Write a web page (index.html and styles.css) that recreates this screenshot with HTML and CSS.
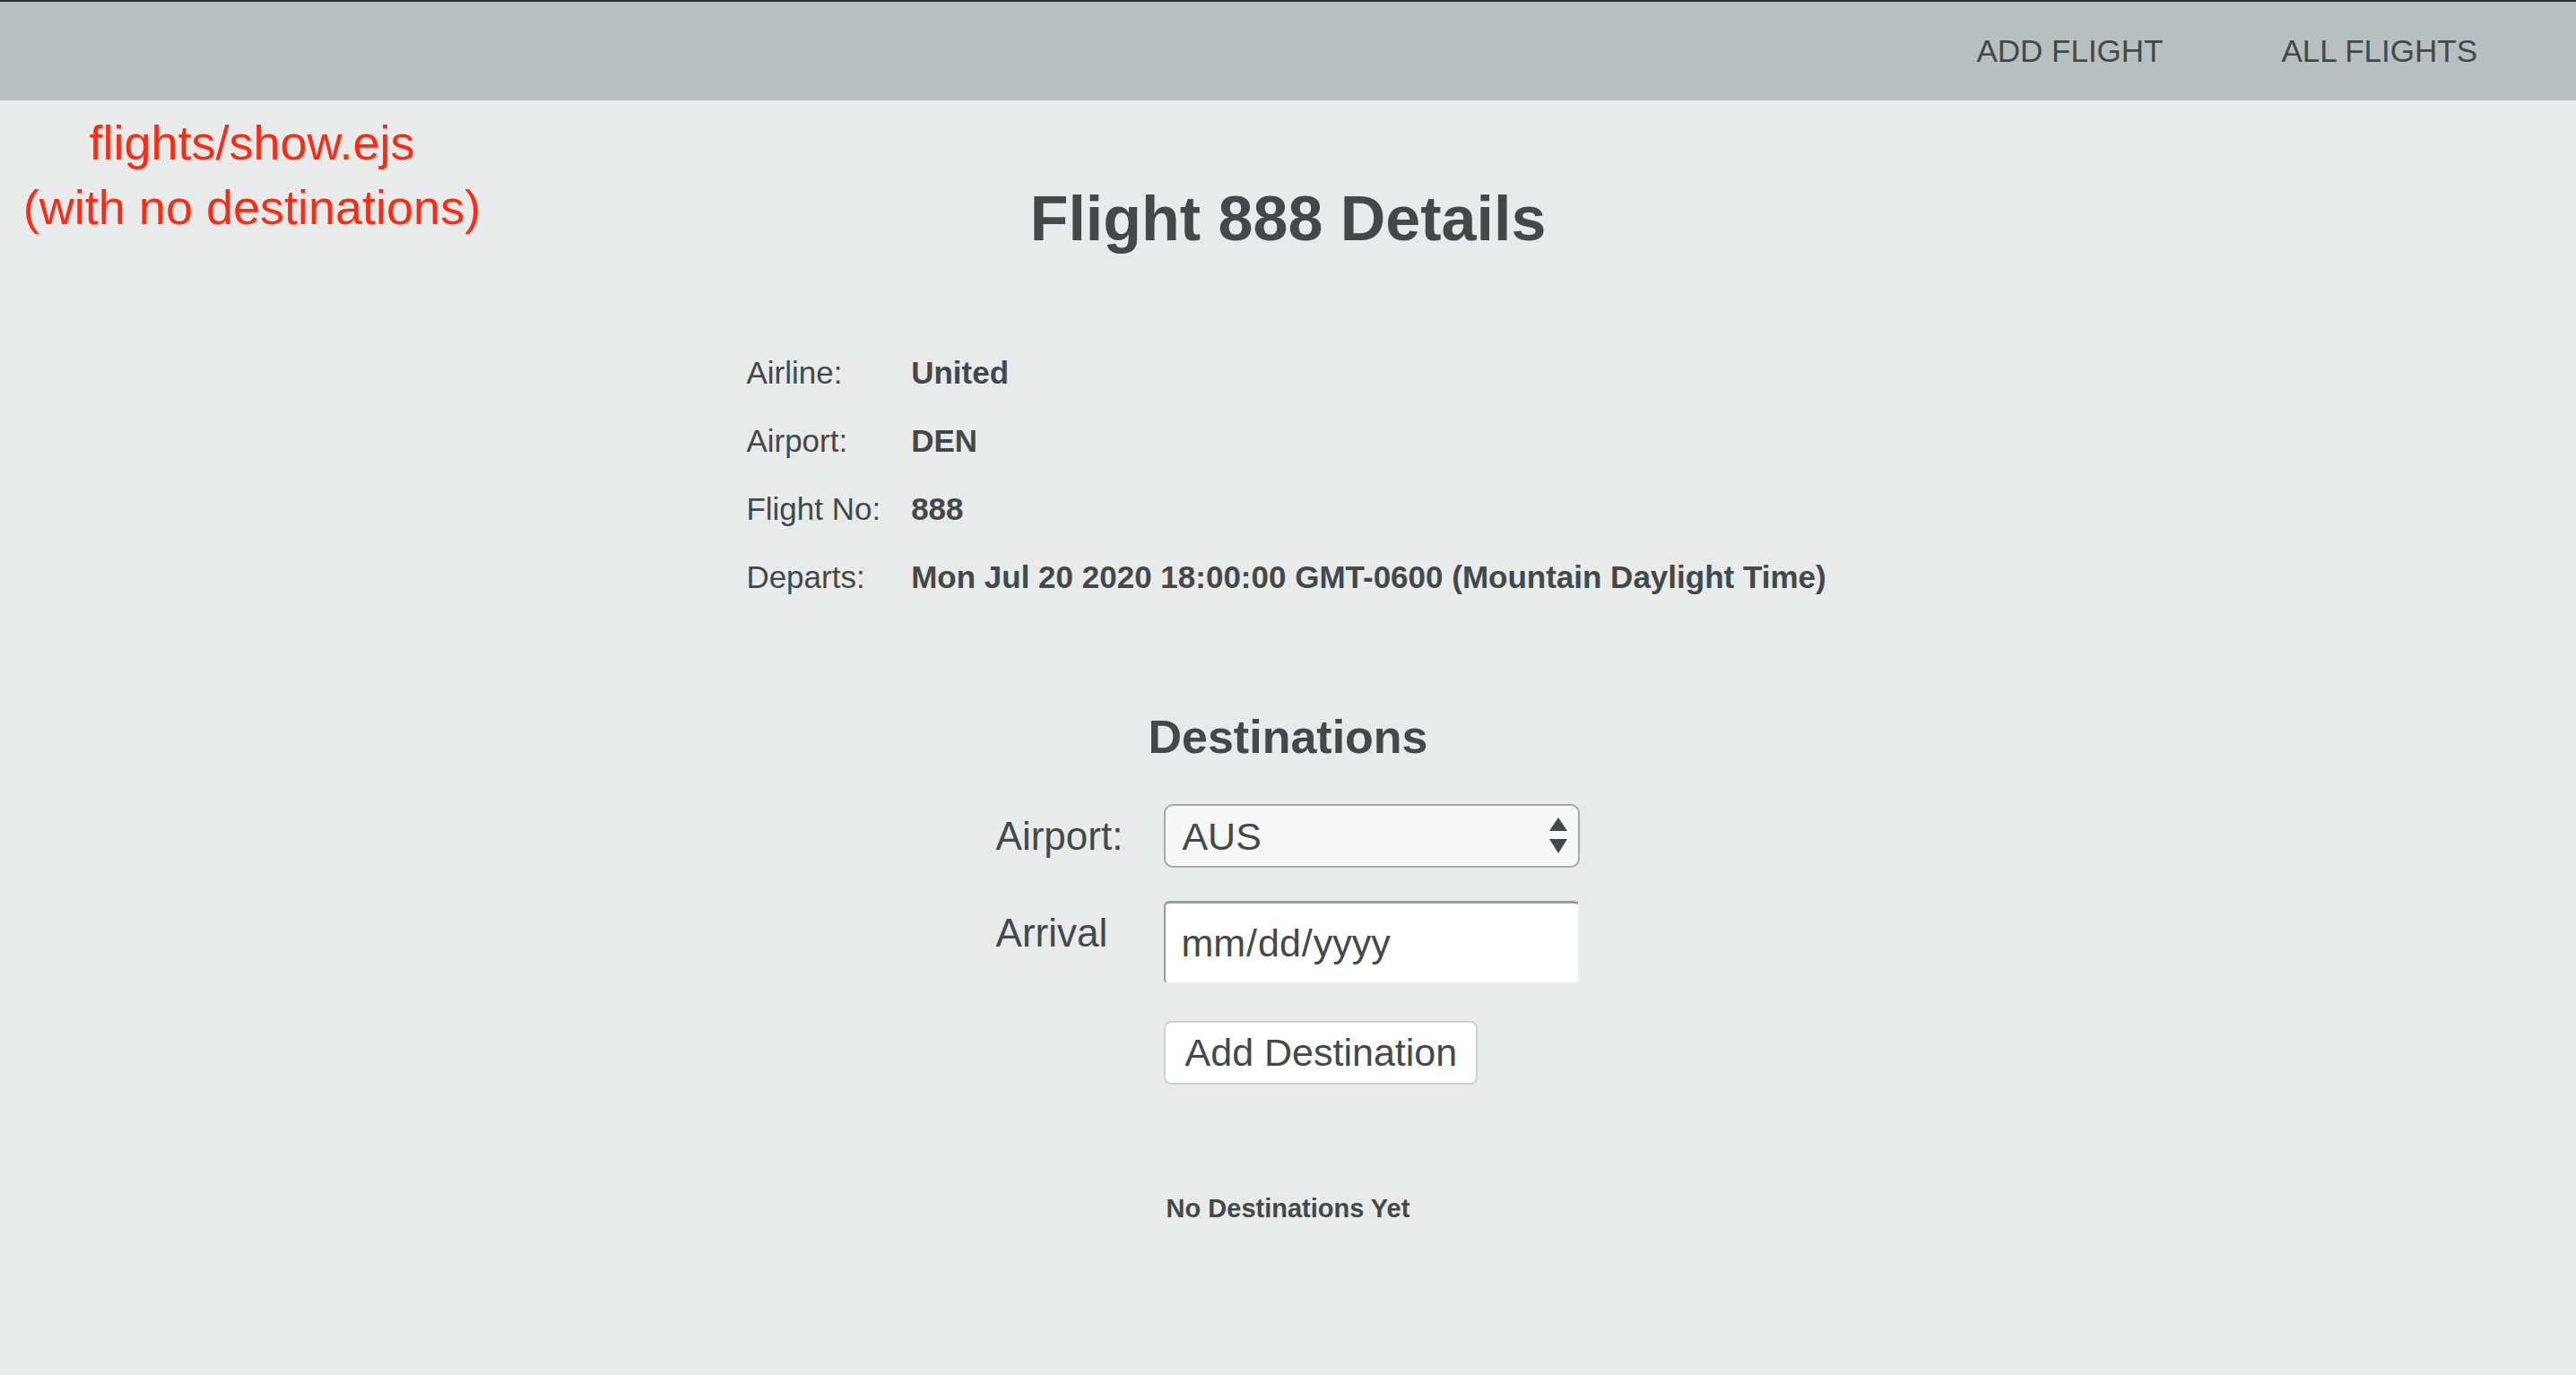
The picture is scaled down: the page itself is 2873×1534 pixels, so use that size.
FILE: index.html
```html
<!DOCTYPE html>
<html lang="en">
<head>
  <meta charset="UTF-8">
  <meta name="viewport" content="width=device-width, initial-scale=1.0">
  <title>Flight Details</title>
  <link rel="stylesheet" href="styles.css">
</head>
<body>

  <!-- Top Navigation -->
  <nav class="navbar">
    <a href="#">ADD FLIGHT</a>
    <a href="#">ALL FLIGHTS</a>
  </nav>

  <div class="note">flights/show.ejs<br>(with no destinations)</div>

  <main class="page">
    <h1>Flight 888 Details</h1>

    <div class="details">
      <div class="label">Airline:</div>
      <div class="value">United</div>
      <div class="label">Airport:</div>
      <div class="value">DEN</div>
      <div class="label">Flight No:</div>
      <div class="value">888</div>
      <div class="label">Departs:</div>
      <div class="value">Mon Jul 20 2020 18:00:00 GMT-0600 (Mountain Daylight Time)</div>
    </div>

    <!-- Destinations -->
    <h2>Destinations</h2>
    <form class="dest-form">
      <label for="airport">Airport:</label>
      <div class="select-wrap">
        <select id="airport" name="airport">
          <option>AUS</option>
          <option>DAL</option>
          <option>LAX</option>
          <option>SAN</option>
          <option>SEA</option>
        </select>
        <svg class="select-arrows" width="22" height="42" viewBox="0 0 22 42">
          <polygon points="11,0 21,15 1,15" fill="#424848"/>
          <polygon points="1,24 21,24 11,40" fill="#424848"/>
        </svg>
      </div>
      <label for="arrival">Arrival</label>
      <input type="date" id="arrival" name="arrival">
      <div></div>
      <button type="submit">Add Destination</button>
    </form>

    <h5>No Destinations Yet</h5>
  </main>

</body>
</html>
```

FILE: styles.css
```css
body {
  font-family: "Liberation Sans", Arial, Helvetica, sans-serif;
  margin: 0;
  padding: 0;
  background-color: #e8ebea;
  color: #434949;
  min-height: 100vh;
  position: relative;
}
.navbar {
  display: flex;
  justify-content: flex-end;
  align-items: center;
  gap: 132px;
  height: 110px;
  padding-right: 110px;
  background-color: #b8bfc1;
  border-top: 2px solid #2e3131;
}
.navbar a {
  color: #434949;
  font-size: 35px;
  text-decoration: none;
}
.note {
  position: absolute;
  top: 123px;
  left: 0;
  width: 562px;
  text-align: center;
  color: #ff2a14;
  font-size: 54px;
  line-height: 72px;
}
.page {
  display: flex;
  flex-direction: column;
  align-items: center;
}
h1 {
  font-size: 70px;
  line-height: 80px;
  margin: 92px 0 0;
}
.details {
  display: grid;
  grid-template-columns: auto auto;
  column-gap: 34px;
  row-gap: 36px;
  margin-top: 112px;
  margin-right: 4px;
  font-size: 35px;
  line-height: 40px;
}
.details .value {
  font-weight: bold;
}
h2 {
  font-size: 52px;
  line-height: 60px;
  margin: 128px 0 0;
}
.dest-form {
  display: grid;
  grid-template-columns: auto 464px;
  column-gap: 46px;
  row-gap: 37px;
  margin-top: 45px;
  font-size: 44px;
}
.dest-form label {
  line-height: 71px;
  align-self: start;
}
.select-wrap {
  position: relative;
}
select {
  appearance: none;
  -webkit-appearance: none;
  width: 100%;
  height: 71px;
  box-sizing: border-box;
  padding: 0 50px 0 18px;
  font-family: inherit;
  font-size: 43px;
  color: #434949;
  background-color: #f7f7f7;
  border: 2px solid #a9a9a9;
  border-radius: 10px;
}
.select-arrows {
  position: absolute;
  right: 13px;
  top: 15px;
  pointer-events: none;
}
input[type="date"] {
  width: 100%;
  height: 93px;
  box-sizing: border-box;
  padding: 0 16px;
  font-family: inherit;
  font-size: 43px;
  color: #434949;
  background-color: #fff;
  border-top: 3px solid #9a9a9a;
  border-left: 2px solid #9a9a9a;
  border-right: 2px solid #eceeee;
  border-bottom: 2px solid #eceeee;
  border-radius: 6px;
}
input[type="date"]::-webkit-calendar-picker-indicator {
  display: none;
}
input[type="date"]::-webkit-datetime-edit {
  padding: 0;
}
button {
  justify-self: start;
  width: 350px;
  height: 71px;
  margin-top: 4px;
  font-family: inherit;
  font-size: 43px;
  color: #434949;
  background-color: #fff;
  border: 2px solid #cfd1d1;
  border-radius: 8px;
  cursor: pointer;
}
h5 {
  font-size: 29px;
  line-height: 34px;
  margin: 121px 0 0;
}
```
